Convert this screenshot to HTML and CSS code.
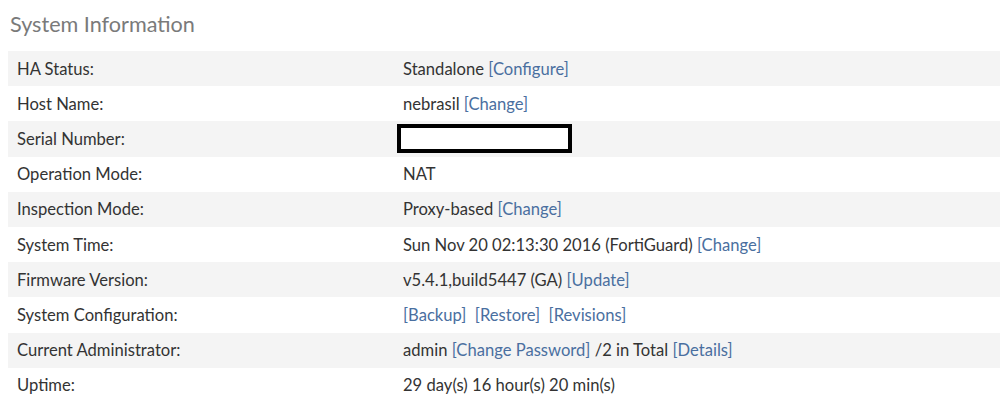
FILE: index.html
```html
<!DOCTYPE html>
<html>

<head>
    <title>System Information</title>
    <link rel="stylesheet" href="styles.css">
</head>

<body>
    <div class="panel">
        <h2 class="panel-title">System Information</h2>

        <!-- System info table -->
        <table class="info-table">
            <tr>
                <td class="label">HA Status:</td>
                <td>Standalone <a href="#">[Configure]</a></td>
            </tr>
            <tr>
                <td class="label">Host Name:</td>
                <td>nebrasil <a href="#">[Change]</a></td>
            </tr>
            <tr>
                <td class="label">Serial Number:</td>
                <td><span class="redacted"></span></td>
            </tr>
            <tr>
                <td class="label">Operation Mode:</td>
                <td>NAT</td>
            </tr>
            <tr>
                <td class="label">Inspection Mode:</td>
                <td>Proxy-based <a href="#">[Change]</a></td>
            </tr>
            <tr>
                <td class="label">System Time:</td>
                <td>Sun Nov 20 02:13:30 2016 (FortiGuard) <a href="#">[Change]</a></td>
            </tr>
            <tr>
                <td class="label">Firmware Version:</td>
                <td>v5.4.1,build5447 (GA) <a href="#">[Update]</a></td>
            </tr>
            <tr>
                <td class="label">System Configuration:</td>
                <td><a href="#">[Backup]</a>&nbsp; <a href="#">[Restore]</a>&nbsp; <a href="#">[Revisions]</a></td>
            </tr>
            <tr>
                <td class="label">Current Administrator:</td>
                <td>admin <a href="#">[Change Password]</a> /2 in Total <a href="#">[Details]</a></td>
            </tr>
            <tr>
                <td class="label">Uptime:</td>
                <td>29 day(s) 16 hour(s) 20 min(s)</td>
            </tr>
        </table>
    </div>
</body>

</html>
```

FILE: styles.css
```css
/* Page */
body {
    font-family: Lato, "Open Sans", sans-serif;
    margin: 0;
    padding: 0 0 0 8px;
    background-color: #ffffff;
    color: #333333;
}

.panel-title {
    font-size: 21.6px;
    font-weight: normal;
    color: #7a7a7a;
    margin: 0;
    padding: 11px 0 0 2px;
    height: 51px;
    box-sizing: border-box;
}

/* Info table */
.info-table {
    width: 100%;
    border-collapse: collapse;
    font-size: 16.6px;
}

.info-table tr:nth-child(odd) {
    background-color: #f4f4f4;
}

.info-table td {
    height: 35.2px;
    padding: 0 9px;
    vertical-align: middle;
}

.info-table td.label {
    width: 368px;
}

.info-table a {
    color: #4a6fa0;
    text-decoration: none;
}

/* Redacted serial number */
.redacted {
    display: inline-block;
    vertical-align: middle;
    width: 167px;
    height: 21px;
    border: 4px solid #000000;
    margin-left: -6px;
    background-color: #ffffff;
}
```
